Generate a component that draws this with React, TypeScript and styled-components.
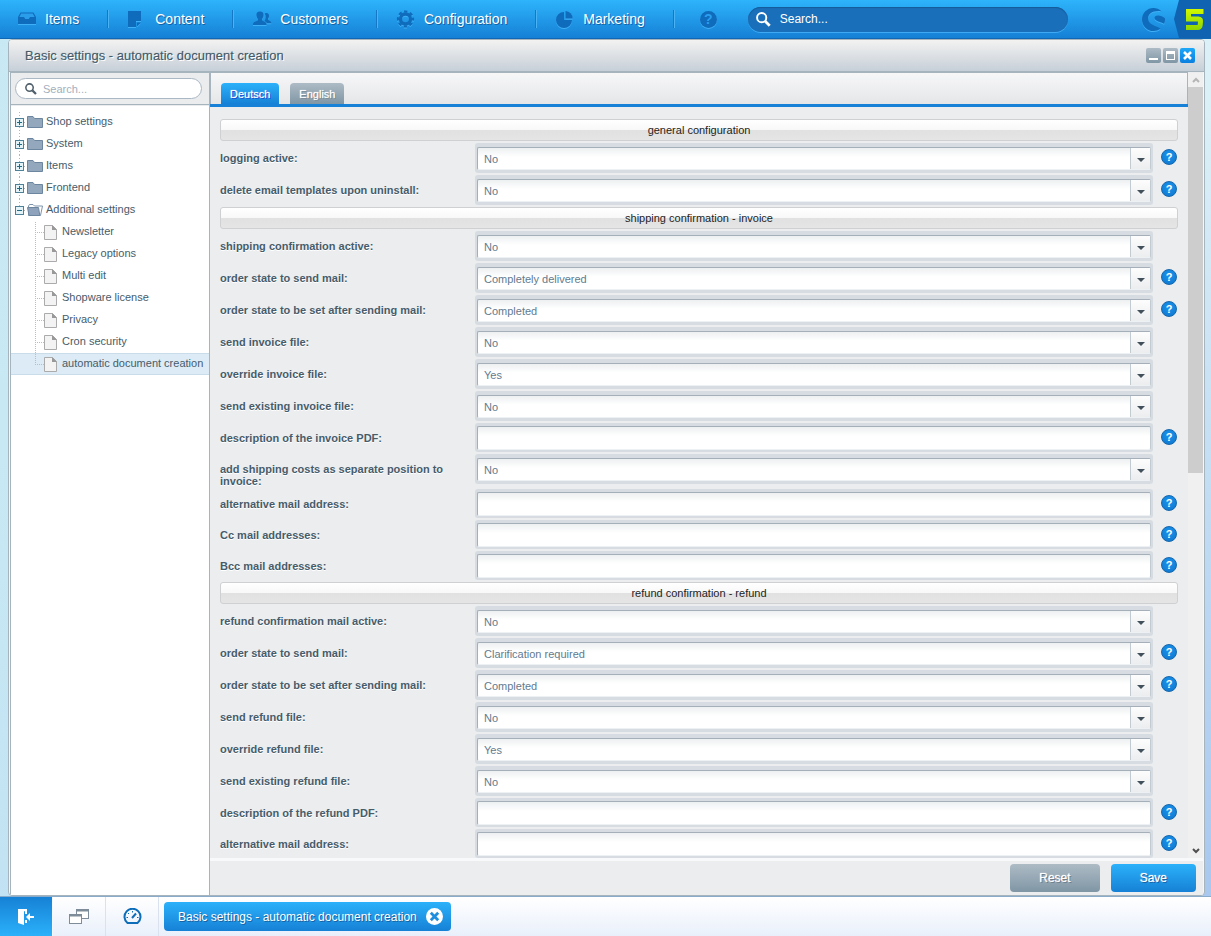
import React from 'react';
import styled, { createGlobalStyle, css } from 'styled-components';
import { SiShopware } from 'react-icons/si';

const line = '#a6b4be';
const blue = 'linear-gradient(#2bb1fa, #1681d6)';
const grey = 'linear-gradient(#adbbc5, #8096a5)';

const GlobalStyle = createGlobalStyle`
  *, *::before, *::after { box-sizing: border-box; }
  body { margin: 0; }
  body, button, input, select {
    font-family: 'Liberation Sans', Arial, sans-serif;
    font-size: 11px;
  }
  button { border: 0; padding: 0; cursor: pointer; }
  svg { display: block; flex: none; }
`;

const Screen = styled.div`
  display: flex;
  flex-direction: column;
  height: 100vh;
  min-height: 400px;
  background: linear-gradient(100deg, #c8e9f4 0%, rgba(200, 233, 244, 0) 60%),
    linear-gradient(#dcf1f7 10%, #a9c8ef 95%);
`;

/* Top navigation */

const NavBar = styled.header`
  display: flex;
  align-items: center;
  flex: none;
  height: 39px;
  background: linear-gradient(#2eb4fb, #1580d6);
  border-bottom: 1px solid #1068b4;
`;

const NavList = styled.nav`
  display: flex;
  height: 100%;
  align-items: center;
`;

const NavItem = styled.a<{ $first?: boolean }>`
  display: flex;
  align-items: center;
  gap: 8px;
  height: 18px;
  padding: 0 28px 0 ${(p) => (p.$first ? 17 : 19)}px;
  border-left: ${(p) => (p.$first ? '0' : '1px solid #1677c4')};
  box-shadow: ${(p) => (p.$first ? 'none' : 'inset 1px 0 0 #4bb3f3')};
  font-size: 14px;
  line-height: 18px;
  color: #fff;
  text-decoration: none;
  text-shadow: 1px 1px 0 #1762a3;
`;

const NavIcon = styled.svg`
  width: 20px;
  height: 20px;
  color: #0f6bbb;
  filter: drop-shadow(0 1px 0 #40b0f6);
`;

const NavHelp = styled.div`
  display: flex;
  align-items: center;
  height: 18px;
  padding: 0 31px 0 26px;
  border-left: 1px solid #1677c4;
  box-shadow: inset 1px 0 0 #4bb3f3;
`;

const NavHelpButton = styled.button`
  width: 17px;
  height: 17px;
  border-radius: 50%;
  background: #0f6bbb;
  box-shadow: 0 1px 0 #40b0f6;
  color: #2b9ff0;
  font-size: 14px;
  font-weight: bold;
  line-height: 17px;
`;

const NavSearch = styled.label`
  display: flex;
  align-items: center;
  gap: 9px;
  flex: 0 1 320px;
  min-width: 120px;
  height: 25px;
  padding: 0 9px 0 8px;
  border-radius: 13px;
  background: #196fba;
  box-shadow: inset 0 1px 1px #155a98, 0 1px 0 #3fa9f3;
  color: #fff;
  input {
    flex: 1;
    min-width: 0;
    padding: 0;
    border: 0;
    outline: 0;
    background: none;
    color: #fff;
    font-size: 12px;
  }
  input::placeholder { color: #fff; opacity: 1; }
`;

const Brand = styled.div`
  display: flex;
  align-items: center;
  gap: 9px;
  height: 100%;
  margin-left: auto;
`;

const Swirl = styled(SiShopware)`
  width: 23px;
  height: 23px;
  color: #0f6bbb;
  filter: drop-shadow(0 1px 0 #40b0f6);
`;

/* Window */

const Desktop = styled.main`
  display: flex;
  flex: 1;
  min-height: 0;
  padding: 0 6px 0 8px;
`;

const Window = styled.section`
  display: flex;
  flex-direction: column;
  flex: 1;
  min-width: 0;
  border: 1px solid ${line};
  border-radius: 4px;
  background: #f5f7f9;
  overflow: hidden;
`;

const TitleBar = styled.div`
  display: flex;
  align-items: center;
  justify-content: space-between;
  flex: none;
  height: 32px;
  padding: 0 9px 0 16px;
  border-bottom: 1px solid ${line};
  background: linear-gradient(#f3f2f1, #c6cfd8);
`;

const Title = styled.h1`
  margin: 0;
  font-size: 13px;
  line-height: 16px;
  font-weight: normal;
  color: #475c6a;
  text-shadow: 1px 1px 0 #fff, 0 0 1px #7c8b96;
`;

const WindowButtons = styled.div`
  display: flex;
  gap: 2px;
`;

const WindowButton = styled.button<{ $blue?: boolean }>`
  width: 15px;
  height: 15px;
  border-radius: 2px;
  background: ${(p) => (p.$blue ? 'linear-gradient(#1fa8f7, #0a7fe0)' : grey)};
`;

const WindowBody = styled.div`
  display: flex;
  flex: 1;
  min-height: 0;
  margin: 0 1px;
`;

const Sidebar = styled.aside`
  display: flex;
  flex-direction: column;
  flex: none;
  width: 200px;
  border: 1px solid ${line};
  border-bottom: 0;
  background: #fff;
`;

const SidebarHead = styled.div`
  flex: none;
  height: 32px;
  padding: 5px 7px 0 4px;
  border-bottom: 1px solid ${line};
  background: #ebecee;
`;

const SidebarSearch = styled.label`
  display: flex;
  align-items: center;
  gap: 6px;
  height: 21px;
  padding: 0 9px;
  border: 1px solid #aab7c4;
  border-radius: 11px;
  background: #fff;
  color: #4f5f6b;
  input {
    flex: 1;
    min-width: 0;
    padding: 0;
    border: 0;
    outline: 0;
    background: none;
    color: #475c6a;
  }
  input::placeholder { color: #9fb0be; opacity: 1; }
`;

const Tree = styled.ul`
  margin: 0;
  padding: 5px 0 0;
  border-top: 1px solid #ebecee;
  list-style: none;
`;

const TreeRow = styled.li<{ $child?: boolean; $active?: boolean }>`
  display: flex;
  gap: ${(p) => (p.$child ? 5 : 3)}px;
  height: 22px;
  background: ${(p) => (p.$active ? '#ddebf6' : 'none')};
  box-shadow: ${(p) => (p.$active ? 'inset 0 1px 0 #c9dcea, inset 0 -1px 0 #c9dcea' : 'none')};
  line-height: 21px;
  color: #475c6a;
  white-space: nowrap;
  a { color: inherit; text-decoration: none; }
`;

const Content = styled.div`
  display: flex;
  flex-direction: column;
  flex: 1;
  min-width: 0;
  background: #ebedef;
`;

const ScrollRegion = styled.div`
  display: flex;
  flex: 1;
  min-height: 0;
`;

const Panel = styled.div`
  display: flex;
  flex-direction: column;
  flex: 1;
  min-width: 0;
`;

const TabBar = styled.div`
  display: flex;
  align-items: flex-end;
  gap: 11px;
  flex: none;
  height: 35px;
  padding-left: 11px;
  border-top: 1px solid ${line};
  border-bottom: 3px solid #1681d6;
  box-shadow: inset -1px 0 0 ${line}, inset 1px 0 0 ${line};
  background: linear-gradient(#f7f7f8, #e4e6e8);
`;

const Tab = styled.button<{ $active?: boolean }>`
  height: 21px;
  padding: 1px 9px 0;
  border-radius: 4px 4px 0 0;
  background: ${(p) => (p.$active ? blue : grey)};
  color: #fff;
  line-height: 20px;
  text-shadow: ${(p) => (p.$active ? '1px 1px 0 #1a4fd0, 0 0 1px #fff' : '1px 1px 0 #7c8b96, 0 0 1px #fff')};
`;

const Form = styled.form`
  display: flex;
  flex-direction: column;
  gap: 2px;
  flex: 1;
  min-height: 0;
  padding: 12px 10px 0;
  overflow-y: auto;
  scrollbar-width: none;
`;

const GroupTitle = styled.h2`
  flex: none;
  height: 22px;
  margin: 0;
  border: 1px solid #cfd0d1;
  border-radius: 3px;
  background: linear-gradient(#fff, #f8f8f8 50%, #e1e1e1 50%, #e5e5e5);
  font-size: 11px;
  line-height: 20px;
  font-weight: normal;
  text-align: center;
  color: #222;
`;

const FieldRow = styled.div`
  display: grid;
  grid-template-columns: 255px minmax(0, 1fr) 25px;
  align-items: start;
  flex: none;
`;

const FieldLabel = styled.label`
  padding: 9px 8px 0 0;
  font-weight: bold;
  line-height: 12px;
  color: #475c6a;
  text-shadow: 0 1px 0 #fff;
`;

const FieldFrame = styled.div<{ $select?: boolean }>`
  position: relative;
  height: ${(p) => (p.$select ? 30 : 29)}px;
  padding: ${(p) => (p.$select ? '4px 2px 3px' : '3px 2px 2px')};
  border-radius: 3px;
  background: #d6dce2;
`;

const control = css`
  display: block;
  width: 100%;
  height: 100%;
  margin: 0;
  padding: 0 6px;
  border: 1px solid #a4afb9;
  border-right-color: #c3cbd2;
  border-bottom-color: #eef1f3;
  border-radius: 2px;
  outline: 0;
  background: linear-gradient(#edf0f1, #fff 9px);
  color: #627a8e;
`;

const TextInput = styled.input`
  ${control}
`;

const Select = styled.select`
  ${control}
  appearance: none;
  padding: 0 24px 0 6px;
`;

const Trigger = styled.span`
  position: absolute;
  top: 5px;
  right: 3px;
  bottom: 4px;
  display: flex;
  align-items: center;
  justify-content: center;
  width: 20px;
  padding-top: 2px;
  border-left: 1px solid #c3cbd2;
  background: linear-gradient(#fdfdfd, #ecedef);
  pointer-events: none;
`;

const HelpButton = styled.button`
  width: 16px;
  height: 16px;
  margin: 6px 0 0 8px;
  border: 1px solid #1667ac;
  border-radius: 50%;
  background: radial-gradient(circle at 50% 35%, #1a95ee, #0d74cc);
  color: #fff;
  font-size: 11px;
  font-weight: bold;
  line-height: 14px;
`;

const ScrollTrack = styled.div`
  display: flex;
  flex-direction: column;
  justify-content: space-between;
  flex: none;
  width: 15px;
  margin-top: 1px;
  background: #f0f0f0;
`;

const ScrollArrow = styled.div`
  display: flex;
  align-items: center;
  justify-content: center;
  flex: none;
  height: 14px;
`;

const ScrollRail = styled.div`
  flex: 1;
`;

const ScrollThumb = styled.div`
  height: 51%;
  background: #cdcdcd;
`;

const Footer = styled.div`
  display: flex;
  justify-content: flex-end;
  gap: 11px;
  flex: none;
  height: 37px;
  padding: 3px 7px 0;
  border-top: 3px solid #f8f9fb;
`;

const ActionButton = styled.button<{ $primary?: boolean }>`
  height: 28px;
  padding: 0 29px;
  border-radius: 4px;
  background: ${(p) => (p.$primary ? blue : grey)};
  color: #fff;
  font-size: 12px;
  text-shadow: ${(p) =>
    p.$primary ? '1px 1px 0 #1762a3, 0 0 1px #fff' : '1px 1px 0 #6b7d8a, 0 0 1px #fff'};
`;

/* Task bar */

const TaskBar = styled.footer`
  display: flex;
  align-items: stretch;
  flex: none;
  height: 40px;
  border-top: 1px solid #8babcb;
  background: linear-gradient(#fff, #e9f0fb);
`;

const TaskIcon = styled.button<{ $start?: boolean }>`
  display: flex;
  align-items: center;
  justify-content: center;
  width: 53px;
  border-right: 1px solid ${(p) => (p.$start ? '#f4f8fd' : '#d9e2ee')};
  background: ${(p) => (p.$start ? 'linear-gradient(#1681d6, #2bb1fa)' : 'none')};
`;

const Task = styled.div`
  display: flex;
  align-items: center;
  gap: 9px;
  height: 29px;
  margin: 5px;
  padding: 0 8px 0 14px;
  border-radius: 4px;
  background: ${blue};
  color: #fff;
  font-size: 12px;
  text-shadow: 1px 1px 0 #1762a3;
`;

const TaskClose = styled.button`
  width: 17px;
  height: 17px;
  background: none;
`;

const Magnifier = ({ size }: { size: number }) => (
  <svg width={size} height={size} viewBox="0 0 14 14" fill="none" stroke="currentColor">
    <circle cx="5.3" cy="5.3" r="4.3" strokeWidth="1.8" />
    <path d="M8.6 8.6 L12.8 12.8" strokeWidth="2.6" />
  </svg>
);

const InboxIcon = () => (
  <NavIcon viewBox="0 0 20 20" fill="currentColor">
    <path d="M3.5 3.5 H16.5 L19 8 V15 H1 V8 Z" />
    <path d="M4.2 4.5 H15.8 L17.6 8 H13 L11.8 10 H8.2 L7 8 H2.4 Z" fill="#2a9eea" />
  </NavIcon>
);

const NoteIcon = () => (
  <NavIcon viewBox="0 0 20 20" fill="currentColor">
    <path d="M1 2 H14 V12 H9 V18 H1 Z" />
    <path d="M10 13.5 H14 L10 17.5 Z" />
  </NavIcon>
);

const PeopleIcon = () => (
  <NavIcon viewBox="0 0 20 20" fill="currentColor">
    <path d="M14.4 4 c1.9 0 2.8 1.3 2.6 3.2 c-.1 1.3 -.5 2 -1 2.6 v1 l2.6 1.6 c.5 .3 .7 .9 .7 1.9 H15.2 l-2.6 -2.4 c.7 -1.2 1 -2.4 1 -4.2 c0 -1.3 -.3 -2.3 -.9 -3.2 c.4 -.3 1 -.5 1.700 -.5z" />
    <path d="M8 2.500 c2.600 0 3.700 1.600 3.500 4 c-.2 1.600 -.7 2.700 -1.400 3.400 v1.600 l3.400 1.700 c.8 .5 1 1.500 1 2.800 H1 c0 -1.500 .2 -2.400 1 -2.800 l3.800 -1.700 v-1.600 c-.7 -.7 -1.200 -1.800 -1.400 -3.400 c-.2 -2.400 1 -4 3.600 -4z" />
  </NavIcon>
);

const GearIcon = () => (
  <NavIcon viewBox="0 0 20 20" fill="none" stroke="currentColor">
    <circle cx="9.5" cy="10" r="5" strokeWidth="3.4" />
    <circle cx="9.5" cy="10" r="7.5" strokeWidth="2.2" strokeDasharray="3.3 2.59" strokeDashoffset="1.65" />
  </NavIcon>
);

const PieIcon = () => (
  <NavIcon viewBox="0 0 20 20" fill="currentColor">
    <path d="M9 3 V11 H17 A8 8 0 1 1 9 3 Z" />
    <path d="M10.5 2 A7.5 7.5 0 0 1 17.6 9.4 H10.5 Z" />
  </NavIcon>
);

const FiveBadge = () => (
  <svg width="37" height="38" viewBox="0 0 37 38" fill="none">
    <defs>
      <linearGradient id="five" x1="0" y1="9" x2="0" y2="30" gradientUnits="userSpaceOnUse">
        <stop offset="0" stopColor="#d2f800" />
        <stop offset="1" stopColor="#8ed600" />
      </linearGradient>
    </defs>
    <path d="M5 0 H37 V38 H5 L0 19 Z" fill="#0f63b0" />
    <path
      d="M29.500 11.500 H14.500 V19 H24.500 Q26.700 19 26.500 21.500 L26.200 25 Q26 27.500 23.500 27.500 H12"
      stroke="url(#five)"
      strokeWidth="5"
    />
  </svg>
);

const navItems = [
  { label: 'Items', icon: <InboxIcon /> },
  { label: 'Content', icon: <NoteIcon /> },
  { label: 'Customers', icon: <PeopleIcon /> },
  { label: 'Configuration', icon: <GearIcon /> },
  { label: 'Marketing', icon: <PieIcon /> },
];

const FolderIcon = ({ open, first }: { open?: boolean; first?: boolean }) => (
  <svg width="32" height="22" viewBox="0 0 32 22">
    <path
      d={`M8.5 ${first ? 1 : 0} V${open ? 7 : 22}`}
      stroke="#b5b5b5"
      strokeDasharray="1 2"
    />
    <path d="M13 11.5 H16" stroke="#b5b5b5" strokeDasharray="1 2" />
    <rect x="4.5" y="7.5" width="8" height="8" fill="#e4f3f7" stroke="#4e8196" />
    <path d={open ? 'M6 11.5 H11' : 'M6 11.5 H11 M8.5 9 V14'} stroke="#1f6b84" />
    {open ? (
      <>
        <path d="M17.5 7 L18.5 5.5 H22 L23.5 7 H31.5 L29.5 16.5 H17.5 Z" fill="#fff" stroke="#7d93ab" />
        <path d="M16.5 8.5 H27.5 L28.8 16.5 H18 Z" fill="#8ea3bb" stroke="#6d86a0" />
      </>
    ) : (
      <path d="M16.5 16.5 V5.5 H22 L23.5 7.5 H31.5 V16.5 Z" fill="#93a7bd" stroke="#6d86a0" />
    )}
  </svg>
);

const PageIcon = ({ last }: { last?: boolean }) => (
  <svg width="46" height="22" viewBox="0 0 46 22">
    <path d={`M24.5 1 V${last ? 12 : 22}`} stroke="#bdbdbd" strokeDasharray="1 1" />
    <path d="M26 11.5 H33" stroke="#bdbdbd" strokeDasharray="1 1" />
    <path d="M33.5 4.5 H41.5 L45.5 8.5 V18.5 H33.5 Z" fill="#f3f3f3" stroke="#ababab" />
    <path d="M41 4 L46 9 H41 Z" fill="#999" />
  </svg>
);

const folders = ['Shop settings', 'System', 'Items', 'Frontend', 'Additional settings'];
const pages = [
  'Newsletter',
  'Legacy options',
  'Multi edit',
  'Shopware license',
  'Privacy',
  'Cron security',
  'automatic document creation',
];

type FieldData = { label: string; value?: string; help?: boolean };

const groups: { title: string; fields: FieldData[] }[] = [
  {
    title: 'general configuration',
    fields: [
      { label: 'logging active:', value: 'No', help: true },
      { label: 'delete email templates upon uninstall:', value: 'No', help: true },
    ],
  },
  {
    title: 'shipping confirmation - invoice',
    fields: [
      { label: 'shipping confirmation active:', value: 'No' },
      { label: 'order state to send mail:', value: 'Completely delivered', help: true },
      { label: 'order state to be set after sending mail:', value: 'Completed', help: true },
      { label: 'send invoice file:', value: 'No' },
      { label: 'override invoice file:', value: 'Yes' },
      { label: 'send existing invoice file:', value: 'No' },
      { label: 'description of the invoice PDF:', help: true },
      { label: 'add shipping costs as separate position to invoice:', value: 'No' },
      { label: 'alternative mail address:', help: true },
      { label: 'Cc mail addresses:', help: true },
      { label: 'Bcc mail addresses:', help: true },
    ],
  },
  {
    title: 'refund confirmation - refund',
    fields: [
      { label: 'refund confirmation mail active:', value: 'No' },
      { label: 'order state to send mail:', value: 'Clarification required', help: true },
      { label: 'order state to be set after sending mail:', value: 'Completed', help: true },
      { label: 'send refund file:', value: 'No' },
      { label: 'override refund file:', value: 'Yes' },
      { label: 'send existing refund file:', value: 'No' },
      { label: 'description of the refund PDF:', help: true },
      { label: 'alternative mail address:', help: true },
    ],
  },
];

const Field = ({ id, field }: { id: string; field: FieldData }) => (
  <FieldRow>
    <FieldLabel htmlFor={id}>{field.label}</FieldLabel>
    {field.value ? (
      <FieldFrame $select>
        <Select id={id} defaultValue={field.value}>
          <option>{field.value}</option>
        </Select>
        <Trigger>
          <svg width="8" height="4" viewBox="0 0 8 4">
            <path d="M0 0 H8 L4 4 Z" fill="#41505b" />
          </svg>
        </Trigger>
      </FieldFrame>
    ) : (
      <FieldFrame>
        <TextInput id={id} type="text" />
      </FieldFrame>
    )}
    {field.help && <HelpButton type="button">?</HelpButton>}
  </FieldRow>
);

export default function App() {
  return (
    <Screen>
      <GlobalStyle />
      <NavBar>
        <NavList>
          {navItems.map((item, i) => (
            <NavItem key={item.label} href="#" $first={i === 0}>
              {item.icon}
              {item.label}
            </NavItem>
          ))}
        </NavList>
        <NavHelp>
          <NavHelpButton type="button">?</NavHelpButton>
        </NavHelp>
        <NavSearch>
          <Magnifier size={15} />
          <input type="text" placeholder="Search..." aria-label="Search" />
        </NavSearch>
        <Brand>
          <Swirl />
          <FiveBadge />
        </Brand>
      </NavBar>

      <Desktop>
        <Window>
          <TitleBar>
            <Title>Basic settings - automatic document creation</Title>
            <WindowButtons>
              <WindowButton type="button" aria-label="Minimize">
                <svg width="15" height="15"><rect x="3" y="10" width="9" height="2" fill="#fff" /></svg>
              </WindowButton>
              <WindowButton type="button" aria-label="Maximize">
                <svg width="15" height="15">
                  <path d="M3 3 H12 V12 H3 Z M4 6 V11 H11 V6 Z" fill="#fff" fillRule="evenodd" />
                </svg>
              </WindowButton>
              <WindowButton type="button" aria-label="Close" $blue>
                <svg width="15" height="15">
                  <path d="M4 4 L11 11 M11 4 L4 11" stroke="#fff" strokeWidth="2.6" />
                </svg>
              </WindowButton>
            </WindowButtons>
          </TitleBar>

          <WindowBody>
            <Sidebar>
              <SidebarHead>
                <SidebarSearch>
                  <Magnifier size={12} />
                  <input type="text" placeholder="Search..." aria-label="Search settings" />
                </SidebarSearch>
              </SidebarHead>
              <Tree>
                {folders.map((name, i) => (
                  <TreeRow key={name}>
                    <FolderIcon first={i === 0} open={i === folders.length - 1} />
                    <a href="#">{name}</a>
                  </TreeRow>
                ))}
                {pages.map((name, i) => (
                  <TreeRow key={name} $child $active={i === pages.length - 1}>
                    <PageIcon last={i === pages.length - 1} />
                    <a href="#">{name}</a>
                  </TreeRow>
                ))}
              </Tree>
            </Sidebar>

            <Content>
              <ScrollRegion>
                <Panel>
                  <TabBar>
                    <Tab type="button" $active>Deutsch</Tab>
                    <Tab type="button">English</Tab>
                  </TabBar>
                  <Form>
                    {groups.map((group, g) => (
                      <React.Fragment key={group.title}>
                        <GroupTitle>{group.title}</GroupTitle>
                        {group.fields.map((field, f) => (
                          <Field key={field.label} id={`field-${g}-${f}`} field={field} />
                        ))}
                      </React.Fragment>
                    ))}
                  </Form>
                </Panel>
                <ScrollTrack aria-hidden="true">
                  <ScrollArrow>
                    <svg width="8" height="6" fill="none" stroke="#b5b5b5" strokeWidth="2">
                      <path d="M1 5 L4 2 L7 5" />
                    </svg>
                  </ScrollArrow>
                  <ScrollRail>
                    <ScrollThumb />
                  </ScrollRail>
                  <ScrollArrow>
                    <svg width="8" height="6" fill="none" stroke="#505050" strokeWidth="2">
                      <path d="M1 1 L4 4 L7 1" />
                    </svg>
                  </ScrollArrow>
                </ScrollTrack>
              </ScrollRegion>
              <Footer>
                <ActionButton type="button">Reset</ActionButton>
                <ActionButton type="button" $primary>Save</ActionButton>
              </Footer>
            </Content>
          </WindowBody>
        </Window>
      </Desktop>

      <TaskBar>
        <TaskIcon type="button" aria-label="Log out" $start>
          <svg width="16" height="18" viewBox="0 0 16 18" fill="#fff">
            <path d="M0 1 H8 V4 L6 3 V17 L0 15 Z" />
            <path d="M7 12 H9 V15 H7 Z M7 1 H9 V6 H7 Z" />
            <path d="M8 9 L12 5 V8 H16 V10 H12 V13 Z" />
          </svg>
        </TaskIcon>
        <TaskIcon type="button" aria-label="Windows">
          <svg width="20" height="15" viewBox="0 0 20 15" fill="#fff" stroke="#7f8c99">
            <rect x="7.5" y="0.5" width="12" height="9" />
            <path d="M7 1.500 H20" strokeWidth="2" />
            <rect x="0.5" y="5.5" width="12" height="9" />
            <path d="M0 6.500 H13" strokeWidth="2" />
          </svg>
        </TaskIcon>
        <TaskIcon type="button" aria-label="Dashboard">
          <svg width="19" height="17" viewBox="0 0 19 17" fill="none" stroke="#0e6db8">
            <path d="M4.500 15 A8 8 0 1 1 14.500 15 Z" strokeWidth="2" />
            <path d="M9 10 L13 5.500" strokeWidth="2" />
            <path d="M3.500 9.500 H5 M5 5 L6 6 M9.500 3 V4.500 M14 9.500 H15.500" />
          </svg>
        </TaskIcon>
        <Task>
          Basic settings - automatic document creation
          <TaskClose type="button" aria-label="Close task">
            <svg width="17" height="17" viewBox="0 0 17 17">
              <circle cx="8.5" cy="8.5" r="8.5" fill="#fff" />
              <path d="M4.800 4.800 L12.200 12.200 M12.200 4.800 L4.800 12.200" stroke="#1f8fdd" strokeWidth="2.8" />
            </svg>
          </TaskClose>
        </Task>
      </TaskBar>
    </Screen>
  );
}
